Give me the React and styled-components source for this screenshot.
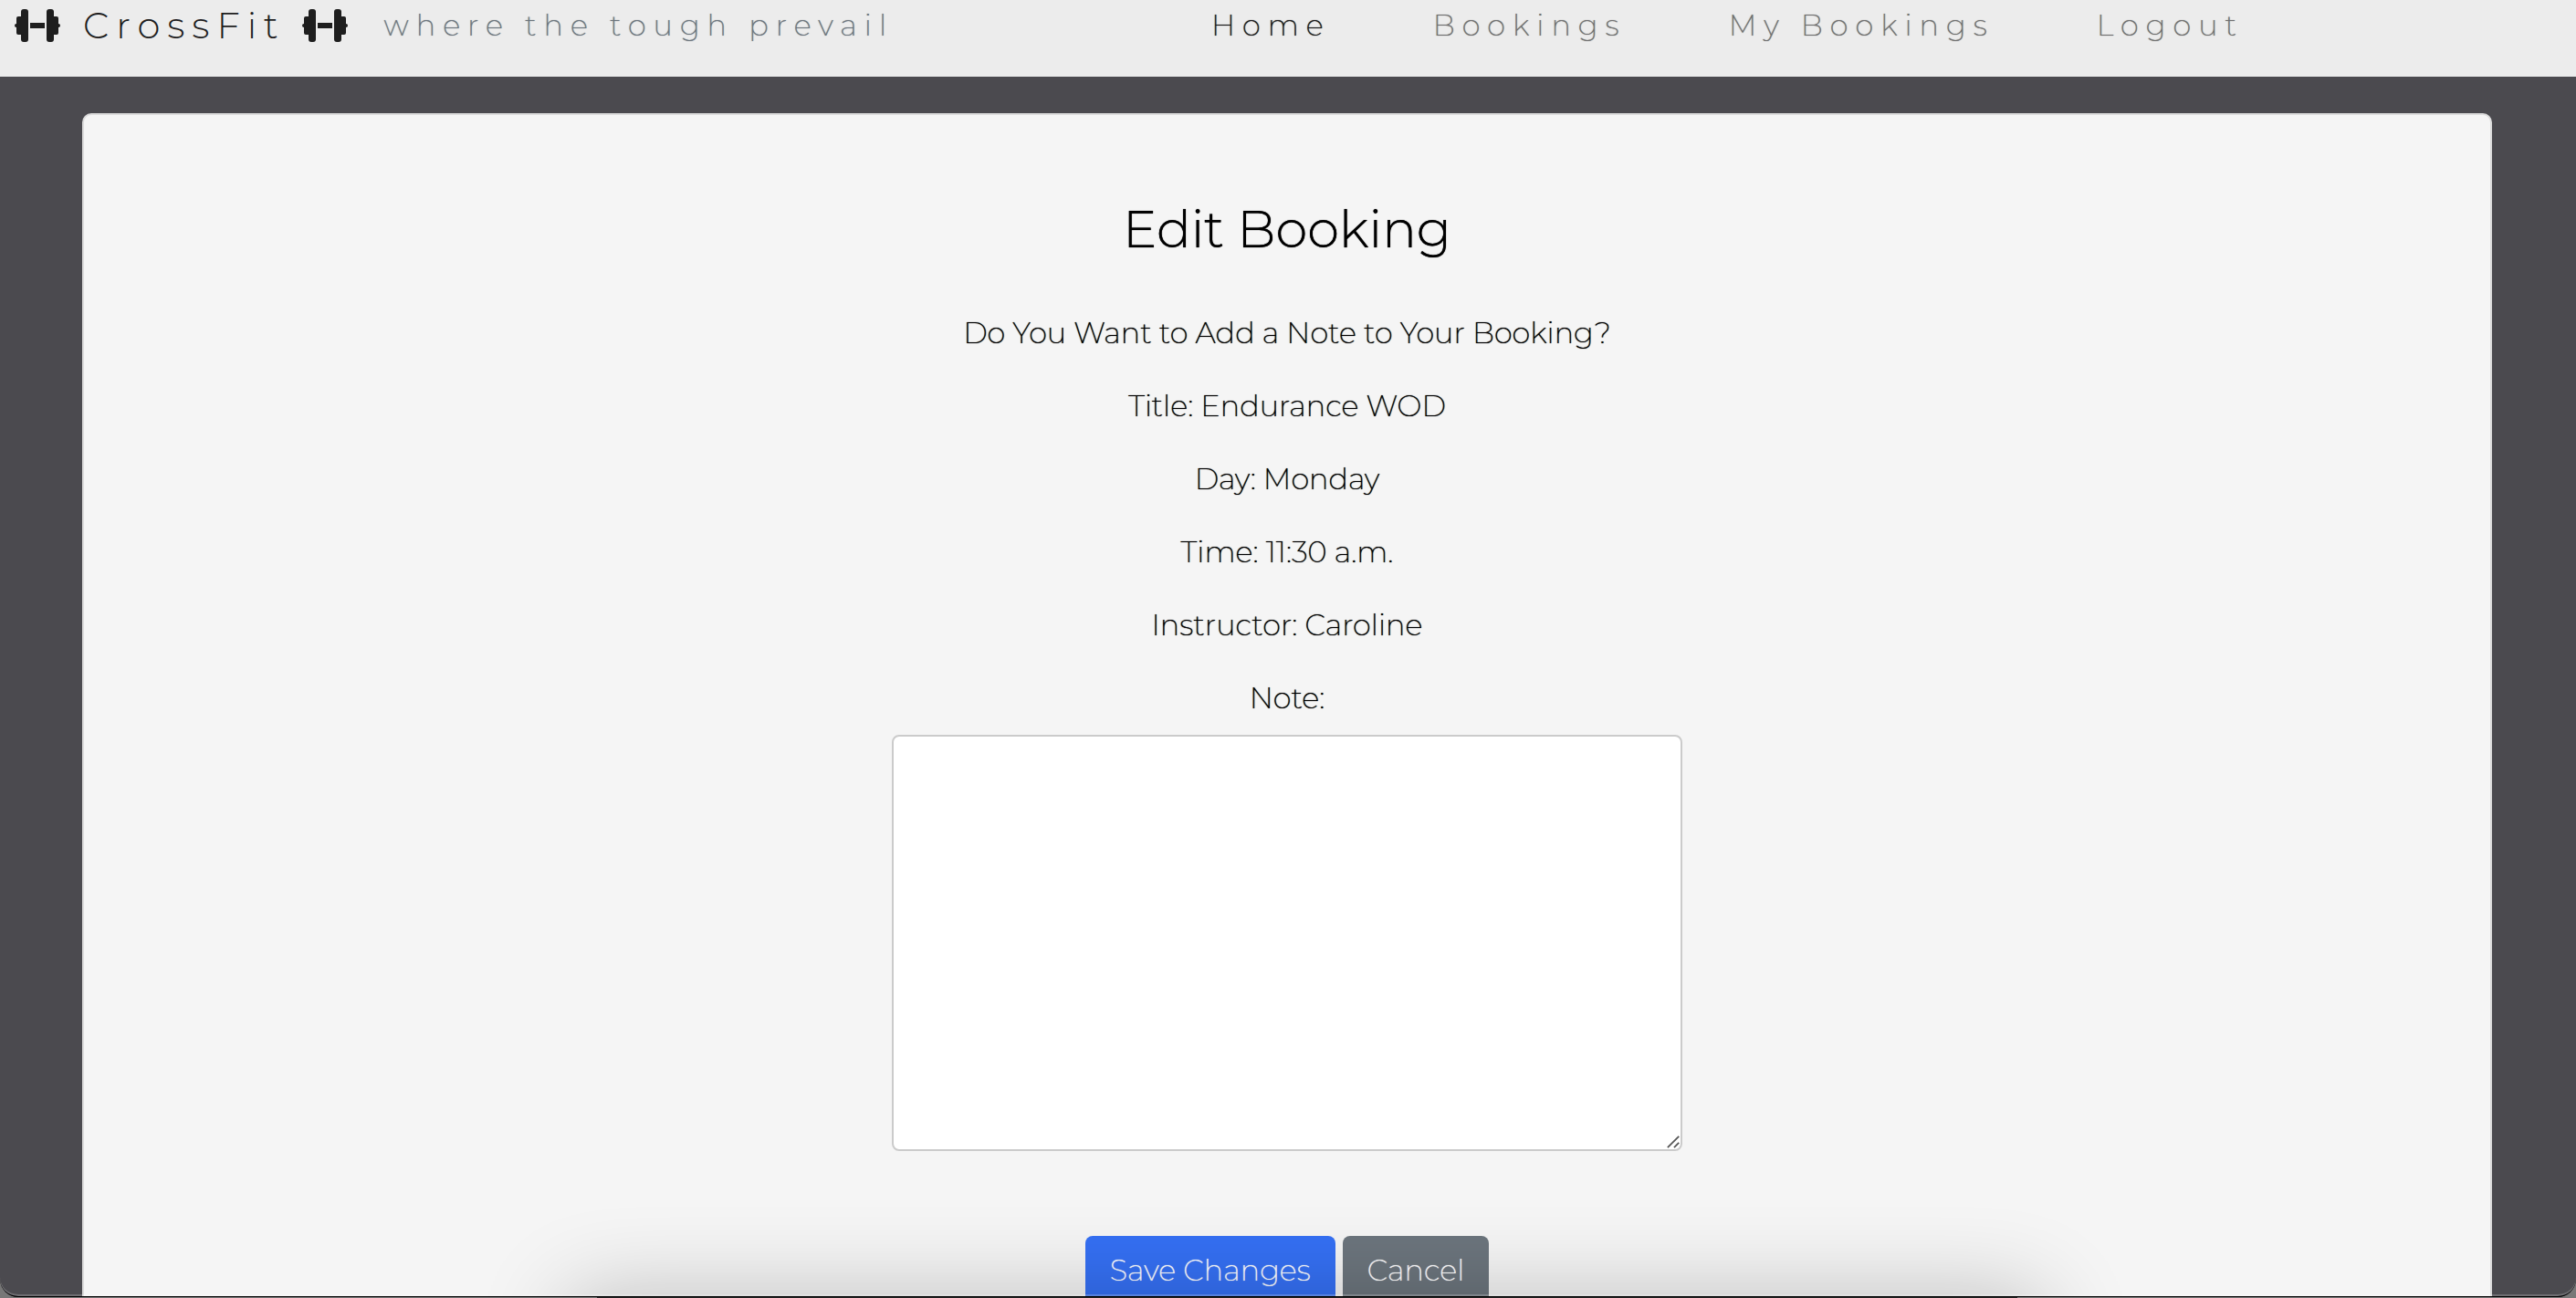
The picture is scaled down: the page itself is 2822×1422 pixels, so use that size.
import React from "react";
import styled, { createGlobalStyle } from "styled-components";

const GlobalStyle = createGlobalStyle`
  *, *::before, *::after { box-sizing: border-box; }
  html, body { margin: 0; background: #4b4a4f; overflow: hidden; }
  body {
    font-family: Montserrat, Inter, "Open Sans", sans-serif;
    font-weight: 200;
    font-size: 32px;
    line-height: 48px;
    color: #000;
    text-shadow: 0 0 1px currentColor;
  }
`;

const Page = styled.div`
  position: relative;
  height: 100vh;
  overflow: hidden;
`;

const Header = styled.header`
  display: flex;
  align-items: flex-start;
  height: 84px;
  padding: 4px 16px;
  background: #ececec;
`;

const Brand = styled.a`
  display: flex;
  align-items: center;
  color: #1e1e1e;
  font-size: 40px;
  font-weight: 300;
  letter-spacing: 8px;
  text-decoration: none;
  text-shadow: none;
`;

const BrandName = styled.span`
  margin: 0 18px 0 25px;
`;

const Tagline = styled.span`
  margin-left: 40px;
  color: #6c757d;
  letter-spacing: 8px;
`;

const Nav = styled.nav`
  display: flex;
  flex: none;
  gap: 112px;
  margin-left: auto;
  margin-right: 348px;
`;

const NavLink = styled.a`
  color: ${(p) => (p.$active ? "#1a1a1a" : "#707070")};
  letter-spacing: 8px;
  text-decoration: none;
`;

const DumbbellIcon = styled.svg`
  flex: none;
  width: 50px;
  height: 36px;
  fill: currentColor;
`;

const Card = styled.main`
  display: flex;
  flex-direction: column;
  align-items: center;
  min-height: 1400px;
  margin: 40px 92px 0 90px;
  padding: 92px 32px;
  border: 2px solid #dcdcdc;
  border-radius: 10px;
  background: #f5f5f5;
  text-align: center;
`;

const Title = styled.h1`
  margin: 0 0 56px;
  font-size: 56px;
  font-weight: 300;
  line-height: 67px;
`;

const Detail = styled.p`
  margin: 0 0 32px;
`;

const Form = styled.form`
  display: flex;
  flex-direction: column;
  align-items: center;
  width: 100%;
`;

const NoteField = styled.textarea`
  width: 100%;
  max-width: 866px;
  height: 456px;
  margin: 16px 0 93px;
  padding: 12px 24px;
  border: 2px solid #cbcbcb;
  border-radius: 8px;
  background: #fff;
  font: inherit;
  resize: vertical;
  outline: none;
  &::-webkit-scrollbar {
    width: 17px;
    height: 17px;
  }
  &::-webkit-resizer {
    background: url("data:image/svg+xml,%3Csvg xmlns='http://www.w3.org/2000/svg' viewBox='0 0 17 17'%3E%3Cpath d='M1 15L15 1M9 15L15 9' stroke='%23555' stroke-width='2'/%3E%3C/svg%3E") no-repeat left top / 100% 100%;
  }
`;

const Actions = styled.div`
  display: flex;
  gap: 8px;
`;

const Button = styled.button`
  height: 76px;
  padding: 12px 27px;
  border: 0;
  border-radius: 8px;
  background: ${(p) => (p.$primary ? "#3570f4" : "#6c757d")};
  color: #fff;
  font: inherit;
  text-shadow: inherit;
`;

const BottomShadow = styled.div`
  position: absolute;
  left: 624px;
  right: 586px;
  bottom: -200px;
  height: 200px;
  box-shadow: 0 0 100px rgba(0, 0, 0, 0.24);
  pointer-events: none;
`;

const WindowEdge = styled.div`
  position: absolute;
  inset: auto 0 1px;
  height: 60px;
  border-bottom: 1px solid #000;
  border-radius: 0 0 20px 20px;
  box-shadow: inset 0 -2px rgba(255, 255, 255, 0.2), 0 20px #777;
  pointer-events: none;
`;

const DockLine = styled.div`
  position: absolute;
  inset: auto 612px 0 654px;
  height: 1px;
  background: #222;
`;

const Dumbbell = () => (
  <DumbbellIcon viewBox="0 0 50 36" aria-hidden="true">
    <rect x="7" y="0" width="8" height="36" rx="3" />
    <rect x="2" y="8" width="8" height="20" rx="2" />
    <rect x="0" y="16" width="4" height="4" rx="2" />
    <rect x="17" y="15" width="16" height="6" />
    <rect x="35" y="0" width="8" height="36" rx="3" />
    <rect x="40" y="8" width="8" height="20" rx="2" />
    <rect x="46" y="16" width="4" height="4" rx="2" />
  </DumbbellIcon>
);

const links = ["Home", "Bookings", "My Bookings", "Logout"];

const details = [
  "Do You Want to Add a Note to Your Booking?",
  "Title: Endurance WOD",
  "Day: Monday",
  "Time: 11:30 a.m.",
  "Instructor: Caroline",
];

export default function App() {
  return (
    <Page>
      <GlobalStyle />
      <Header>
        <Brand href="#home">
          <Dumbbell />
          <BrandName>CrossFit</BrandName>
          <Dumbbell />
        </Brand>
        <Tagline>where the tough prevail</Tagline>
        <Nav>
          {links.map((label, i) => (
            <NavLink key={label} href="#" $active={i === 0}>
              {label}
            </NavLink>
          ))}
        </Nav>
      </Header>
      <Card>
        <Title>Edit Booking</Title>
        {details.map((text) => (
          <Detail key={text}>{text}</Detail>
        ))}
        <Form onSubmit={(e) => e.preventDefault()}>
          <label htmlFor="note">Note:</label>
          <NoteField id="note" name="note" />
          <Actions>
            <Button type="submit" $primary>
              Save Changes
            </Button>
            <Button type="button">Cancel</Button>
          </Actions>
        </Form>
      </Card>
      <BottomShadow />
      <WindowEdge />
      <DockLine />
    </Page>
  );
}
